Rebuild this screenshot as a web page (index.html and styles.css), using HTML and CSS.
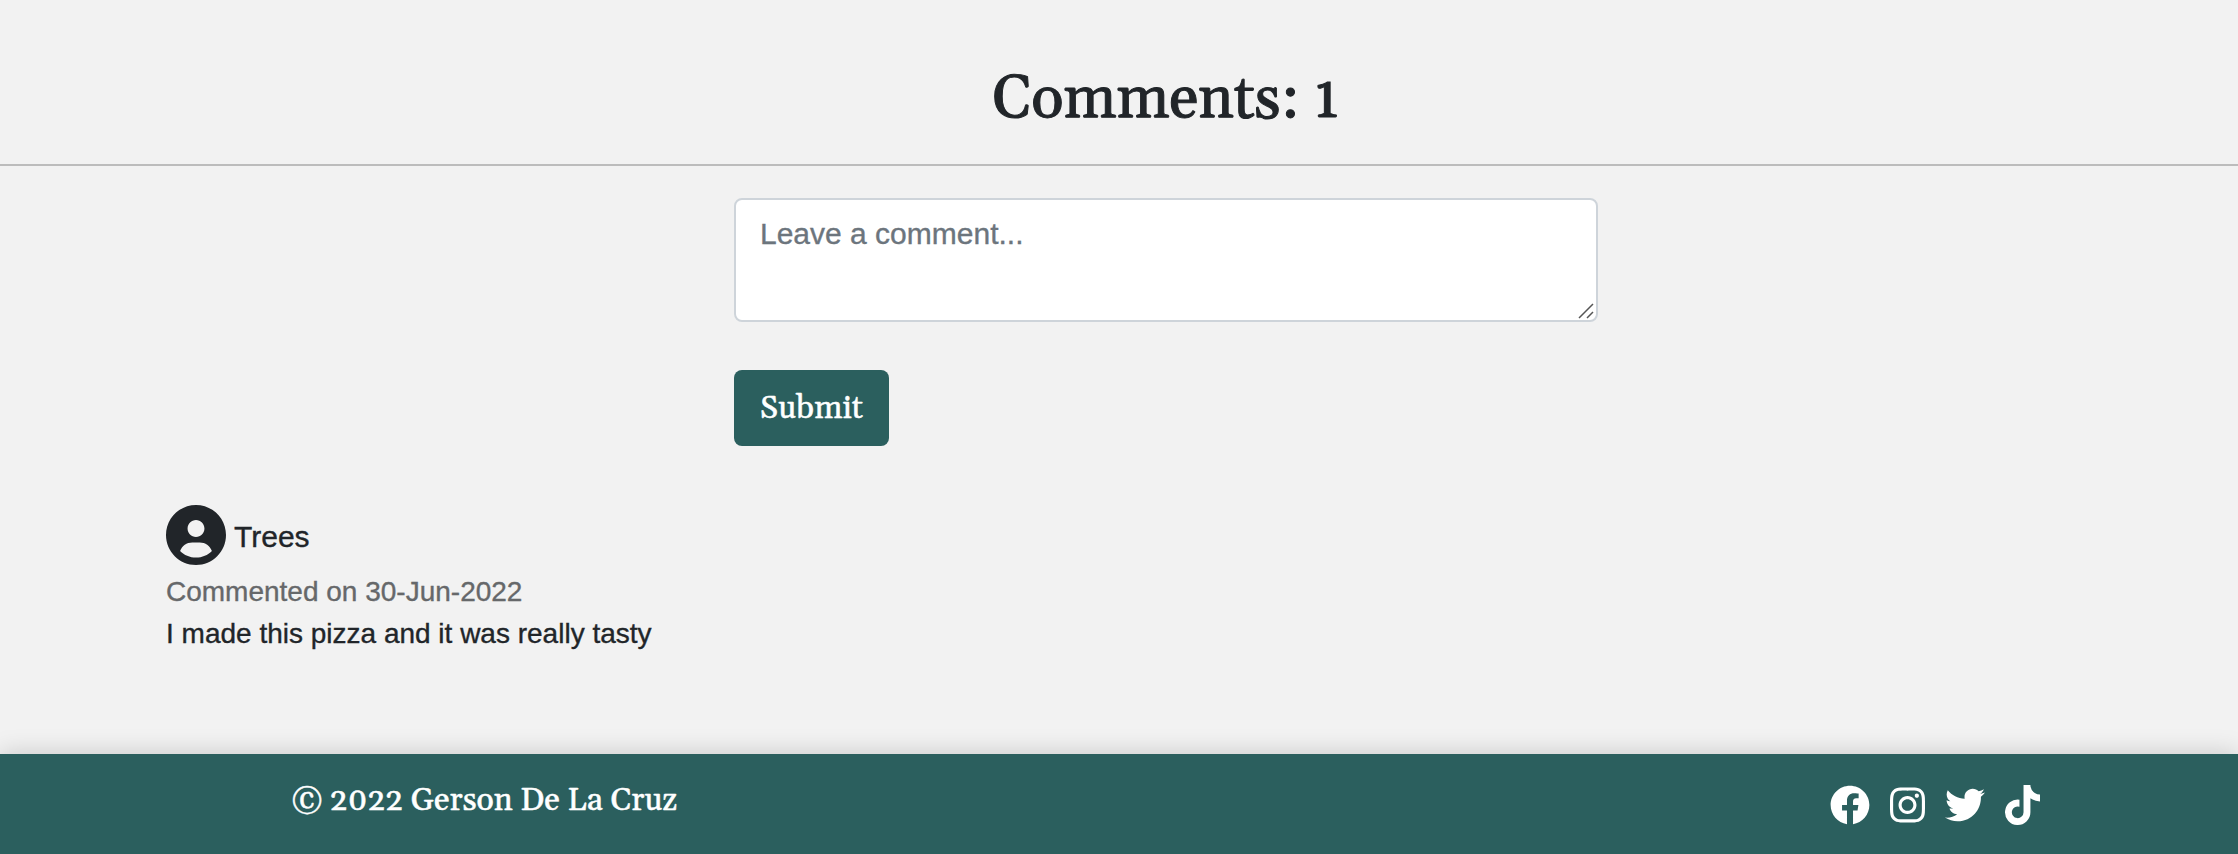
FILE: index.html
```html
<!DOCTYPE html>
<html lang="en">
<head>
<meta charset="utf-8">
<title>Comments</title>
<link rel="stylesheet" href="styles.css">
</head>
<body>
<main class="page">
  <h1 class="title">Comments: 1</h1>
  <form class="form">
    <div class="field">
      <textarea class="input" placeholder="Leave a comment..."></textarea>
      <svg class="grip" viewBox="0 0 16 16"><path d="M1 15 15 1M9 15l6-6"/></svg>
    </div>
    <button class="submit" type="button">Submit</button>
  </form>
  <article class="comment">
    <div class="author">
      <svg class="avatar" viewBox="0 0 512 512"><path d="M256 0C114.6 0 0 114.6 0 256s114.6 256 256 256s256-114.6 256-256S397.4 0 256 0zM256 128c39.77 0 72 32.24 72 72S295.8 272 256 272c-39.76 0-72-32.24-72-72S216.2 128 256 128zM256 448c-52.93 0-100.9-21.53-135.7-56.29C136.5 349.9 176.5 320 224 320h64c47.54 0 87.54 29.88 103.7 71.71C356.9 426.5 308.9 448 256 448z"/></svg>
      <span class="name">Trees</span>
    </div>
    <p class="date">Commented on 30-Jun-2022</p>
    <p class="text">I made this pizza and it was really tasty</p>
  </article>
</main>
<footer class="footer">
  <p class="copy">© 2022 Gerson De La Cruz</p>
  <nav class="social">
    <svg class="icon" viewBox="0 0 512 512"><path d="M504 256C504 119 393 8 256 8S8 119 8 256c0 123.78 90.69 226.38 209.25 245V327.69h-63V256h63v-54.64c0-62.15 37-96.48 93.67-96.48 27.14 0 55.52 4.84 55.52 4.84v61h-31.28c-30.8 0-40.41 19.12-40.41 38.73V256h68.78l-11 71.69h-57.78V501C413.31 482.38 504 379.78 504 256z"/></svg>
    <svg class="icon narrow" viewBox="0 0 448 512"><path d="M224.1 141c-63.6 0-114.9 51.3-114.9 114.9s51.3 114.9 114.9 114.9S339 319.5 339 255.9 287.7 141 224.1 141zm0 189.6c-41.1 0-74.7-33.5-74.7-74.7s33.5-74.7 74.7-74.7 74.7 33.5 74.7 74.7-33.6 74.7-74.7 74.7zm146.4-194.3c0 14.9-12 26.8-26.8 26.8-14.9 0-26.8-12-26.8-26.8s12-26.8 26.8-26.8 26.8 12 26.8 26.8zm76.1 27.2c-1.7-35.9-9.9-67.7-36.2-93.9-26.2-26.2-58-34.4-93.9-36.2-37-2.1-147.9-2.1-184.9 0-35.8 1.7-67.6 9.9-93.9 36.1s-34.4 58-36.2 93.9c-2.1 37-2.1 147.9 0 184.9 1.7 35.9 9.9 67.7 36.2 93.9s58 34.4 93.9 36.2c37 2.1 147.9 2.1 184.9 0 35.9-1.7 67.7-9.9 93.9-36.2 26.2-26.2 34.4-58 36.2-93.9 2.1-37 2.1-147.8 0-184.8zM398.8 388c-7.8 19.6-22.9 34.7-42.6 42.6-29.5 11.7-99.5 9-132.1 9s-102.7 2.6-132.1-9c-19.6-7.8-34.7-22.9-42.6-42.6-11.7-29.5-9-99.5-9-132.1s-2.6-102.7 9-132.1c7.8-19.6 22.9-34.7 42.6-42.6 29.5-11.7 99.5-9 132.1-9s102.7-2.6 132.1 9c19.6 7.8 34.7 22.9 42.6 42.6 11.7 29.5 9 99.5 9 132.1s2.7 102.7-9 132.1z"/></svg>
    <svg class="icon" viewBox="0 0 512 512"><path d="M459.37 151.716c.325 4.548.325 9.097.325 13.645 0 138.72-105.583 298.558-298.558 298.558-59.452 0-114.68-17.219-161.137-47.106 8.447.974 16.568 1.299 25.34 1.299 49.055 0 94.213-16.568 130.274-44.832-46.132-.975-84.792-31.188-98.112-72.772 6.498.974 12.995 1.624 19.818 1.624 9.421 0 18.843-1.3 27.614-3.573-48.081-9.747-84.143-51.98-84.143-102.985v-1.299c13.969 7.797 30.214 12.67 47.431 13.319-28.264-18.843-46.781-51.005-46.781-87.391 0-19.492 5.197-37.36 14.294-52.954 51.655 63.675 129.3 105.258 216.365 109.807-1.624-7.797-2.599-15.918-2.599-24.04 0-57.828 46.782-104.934 104.934-104.934 30.213 0 57.502 12.67 76.67 33.137 23.715-4.548 46.456-13.32 66.599-25.34-7.798 24.366-24.366 44.833-46.132 57.827 21.117-2.273 41.584-8.122 60.426-16.243-14.292 20.791-32.161 39.308-52.628 54.253z"/></svg>
    <svg class="icon narrow" viewBox="0 0 448 512"><path d="M448 209.91a210.06 210.06 0 0 1-122.77-39.25v178.72A162.55 162.55 0 1 1 185 188.31v89.89a74.62 74.62 0 1 0 52.23 71.18V0h88a121.18 121.18 0 0 0 1.86 22.17A122.18 122.18 0 0 0 381 102.39a121.43 121.43 0 0 0 67 20.14z"/></svg>
  </nav>
</footer>
</body>
</html>
```
FILE: styles.css
```css
* { box-sizing: border-box; }
body {
  margin: 0;
  height: 854px;
  overflow: hidden;
  display: flex;
  flex-direction: column;
  background: #f2f2f2;
  color: #212529;
  font-family: "Liberation Sans", Arial, sans-serif;
  -webkit-text-stroke: .35px currentColor;
}
p, h1 { margin: 0; font-weight: 400; }
.page { height: 754px; }
.title, .submit, .copy {
  font-family: Georgia, Gelasio, "Liberation Serif", serif;
  -webkit-text-stroke: .5px currentColor;
}
.title {
  height: 166px;
  padding: 64px 0 0 94px;
  border-bottom: 2px solid #bcbcbc;
  text-align: center;
  font-size: 60px;
  line-height: 72px;
  white-space: nowrap;
  -webkit-text-stroke: 1px currentColor;
}
.form {
  width: 864px;
  margin: 32px 0 0 734px;
}
.field { position: relative; height: 124px; }
.input {
  display: block;
  width: 100%;
  height: 124px;
  padding: 11px 24px;
  border: 2px solid #ced4da;
  border-radius: 8px;
  background: #fff;
  font: 30px/45px "Liberation Sans", Arial, sans-serif;
  -webkit-text-stroke: .35px #6c757d;
  resize: none;
}
.input::placeholder { color: #6c757d; opacity: 1; }
.grip {
  position: absolute;
  right: 4px;
  bottom: 3px;
  width: 16px;
  height: 16px;
  fill: none;
  stroke: #555;
  stroke-width: 1.5;
}
.submit {
  display: flex;
  align-items: center;
  width: 155px;
  height: 76px;
  margin-top: 48px;
  padding: 0 26px;
  border: 0;
  border-radius: 8px;
  background: #2b5f5e;
  color: #fff;
  font-size: 32px;
}
.comment { margin: 59px 0 0 166px; }
.author { display: flex; align-items: center; gap: 8px; height: 60px; }
.avatar { width: 60px; height: 60px; fill: #212529; }
.name { font-size: 30px; line-height: 36px; padding-top: 4px; }
.date, .text { font-size: 28px; line-height: 42px; }
.date { margin-top: 6px; color: #66686a; }
.footer {
  height: 100px;
  display: flex;
  justify-content: space-between;
  padding: 0 198px 0 292px;
  background: #2b5f5e;
  color: #fff;
  fill: #fff;
  box-shadow: 0 0 24px rgba(0, 0, 0, .18);
}
.copy { padding-top: 27px; font-size: 32px; line-height: 40px; white-space: nowrap; }
.social { display: flex; gap: 20px; padding-top: 31px; }
.icon { width: 40px; height: 40px; }
.narrow { width: 35px; }
```
